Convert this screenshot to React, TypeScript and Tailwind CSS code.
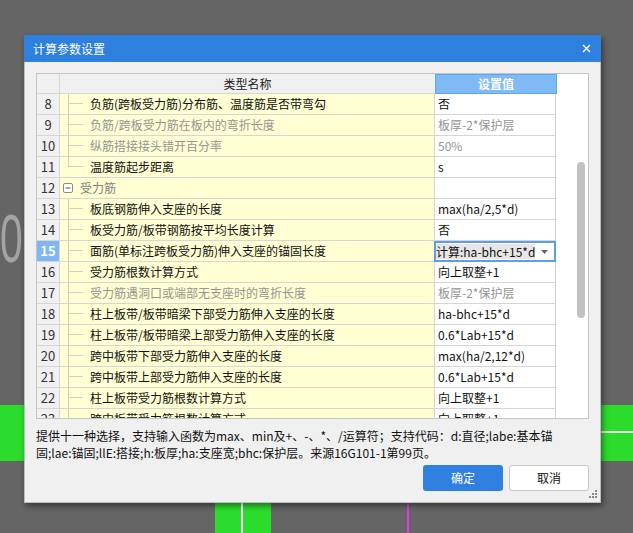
import React from "react";

type Row = {
  n: number;
  name: string;
  value: string;
  gray?: boolean;
  group?: boolean;
  last?: boolean;
  selected?: boolean;
};

const rows: Row[] = [
  { n: 8, name: "负筋(跨板受力筋)分布筋、温度筋是否带弯勾", value: "否" },
  { n: 9, name: "负筋/跨板受力筋在板内的弯折长度", value: "板厚-2*保护层", gray: true },
  { n: 10, name: "纵筋搭接接头错开百分率", value: "50%", gray: true },
  { n: 11, name: "温度筋起步距离", value: "s", last: true },
  { n: 12, name: "受力筋", value: "", group: true },
  { n: 13, name: "板底钢筋伸入支座的长度", value: "max(ha/2,5*d)" },
  { n: 14, name: "板受力筋/板带钢筋按平均长度计算", value: "否" },
  { n: 15, name: "面筋(单标注跨板受力筋)伸入支座的锚固长度", value: "计算:ha-bhc+15*d", selected: true },
  { n: 16, name: "受力筋根数计算方式", value: "向上取整+1" },
  { n: 17, name: "受力筋遇洞口或端部无支座时的弯折长度", value: "板厚-2*保护层", gray: true },
  { n: 18, name: "柱上板带/板带暗梁下部受力筋伸入支座的长度", value: "ha-bhc+15*d" },
  { n: 19, name: "柱上板带/板带暗梁上部受力筋伸入支座的长度", value: "0.6*Lab+15*d" },
  { n: 20, name: "跨中板带下部受力筋伸入支座的长度", value: "max(ha/2,12*d)" },
  { n: 21, name: "跨中板带上部受力筋伸入支座的长度", value: "0.6*Lab+15*d" },
  { n: 22, name: "柱上板带受力筋根数计算方式", value: "向上取整+1" },
  { n: 23, name: "跨中板带受力筋根数计算方式", value: "向上取整+1" },
];

function TreeLine({ last }: { last?: boolean }) {
  return (
    <svg width="30" height="20" className="shrink-0">
      <line x1="8.5" y1="0" x2="8.5" y2={last ? 10 : 20} stroke="#cfcfc4" strokeWidth="1" />
      <line x1="8" y1="9.5" x2="23" y2="9.5" stroke="#cfcfc4" strokeWidth="1" />
    </svg>
  );
}

function MinusBox() {
  return (
    <svg width="20" height="20" className="shrink-0">
      <rect x="3.5" y="5.5" width="9" height="9" rx="1.5" fill="#fff" stroke="#8a8a8a" strokeWidth="1" />
      <line x1="5.5" y1="10" x2="10.5" y2="10" stroke="#555" strokeWidth="1" />
    </svg>
  );
}

function TableRow({ r }: { r: Row }) {
  return (
    <div className="flex h-[21px]">
      <div
        className={
          r.selected
            ? "w-[23px] shrink-0 border-r border-b border-[#d6d6d6] bg-[#7db8f5] text-white font-bold flex items-center justify-center text-[13px]"
            : "w-[23px] shrink-0 border-r border-b border-[#d6d6d6] bg-[#f0f0f0] text-[#333] flex items-center justify-center text-[13px]"
        }
      >
        {r.n}
      </div>
      <div className="w-[375px] shrink-0 border-r border-b border-[#d6d6d6] bg-[#ffffd3] flex items-center overflow-hidden whitespace-nowrap">
        {r.group ? (
          <>
            <MinusBox />
            <span className="text-[#808080]">{r.name}</span>
          </>
        ) : (
          <>
            <TreeLine last={r.last} />
            <span className={r.gray ? "text-[#959595]" : "text-[#111]"}>{r.name}</span>
          </>
        )}
      </div>
      {r.selected ? (
        <div className="w-[122px] -ml-px shrink-0 border-2 border-[#5b9ee9] bg-white flex items-center justify-between whitespace-nowrap overflow-hidden">
          <span className="bg-[#e6e6e6] text-[#111] leading-[15px]">{r.value}</span>
          <svg width="7" height="4" className="mr-[6px] shrink-0">
            <path d="M0 0H7L3.5 4Z" fill="#666" />
          </svg>
        </div>
      ) : (
        <div
          className={
            r.gray
              ? "w-[121px] shrink-0 border-r border-b border-[#d6d6d6] bg-white pl-[3px] flex items-center whitespace-nowrap overflow-hidden text-[#959595]"
              : "w-[121px] shrink-0 border-r border-b border-[#d6d6d6] bg-white pl-[3px] flex items-center whitespace-nowrap overflow-hidden text-[#111]"
          }
        >
          {r.value}
        </div>
      )}
      <div className="flex-1 bg-white" />
    </div>
  );
}

export default function App() {
  return (
    <div className="relative w-[633px] h-[533px] overflow-hidden bg-[#656565] font-['Noto_Sans_CJK_SC',sans-serif]">
      {/* background canvas */}
      <div className="absolute left-0 top-[204px] text-[68px] leading-none text-[#a3a3a3] font-['Liberation_Sans',sans-serif] scale-x-[0.6] origin-left">
        0
      </div>
      <div className="absolute left-0 top-[405px] w-[30px] h-[56px] bg-[#2cdc2c]" />
      <div className="absolute left-[600px] top-[405px] w-[33px] h-[56px] bg-[#2cdc2c]">
        <div className="mt-[26px] h-[2px] bg-[#e8e8e8]" />
      </div>
      <div className="absolute left-[215px] top-[495px] w-[56px] h-[38px] bg-[#2cdc2c] flex">
        <div className="ml-[26px] w-[2px] bg-white" />
      </div>
      <div className="absolute left-[407px] top-[495px] w-[2px] h-[38px] bg-[#e23be2]" />

      {/* dialog */}
      <div className="absolute left-[24px] top-[35px] w-[577px] h-[468px] flex flex-col shadow-[2px_3px_6px_rgba(0,0,0,0.45)]">
        <div className="h-[27px] shrink-0 bg-[#2e80df] flex items-center justify-between pl-[9px] pr-[10px] text-white text-[12px]">
          <span>计算参数设置</span>
          <svg width="9" height="9">
            <path d="M1 1L8 8M8 1L1 8" stroke="white" strokeWidth="1.4" />
          </svg>
        </div>
        <div className="relative flex-1 bg-[#f0f0f0] border-x border-b border-[#b5bfca] pl-[11px] pt-[11px] flex flex-col text-[12px]">
          <div className="relative w-[553px] h-[346px] shrink-0 border border-[#c4c4c4] bg-white overflow-hidden">
            <div className="flex h-[20px]">
              <div className="w-[23px] shrink-0 border-r border-b border-[#d6d6d6] bg-[#f0f0f0]" />
              <div className="w-[375px] shrink-0 border-b border-[#d6d6d6] bg-[#f0f0f0] flex items-center justify-center text-[#222]">
                类型名称
              </div>
              <div className="w-[122px] shrink-0 border border-[#62a5ef] bg-[#80baf6] flex items-center justify-center text-white font-bold">
                设置值
              </div>
              <div className="flex-1 bg-white" />
            </div>
            {rows.map((r) => (
              <TableRow key={r.n} r={r} />
            ))}
            <div className="absolute left-[540px] top-[88px] w-[8px] h-[156px] rounded-full bg-[#c2c2c2]" />
          </div>
          <div className="mt-[8px] leading-[17px] text-[#111] whitespace-nowrap">
            <div>提供十一种选择，支持输入函数为max、min及+、-、*、/运算符；支持代码：d:直径;labe:基本锚</div>
            <div>固;lae:锚固;llE:搭接;h:板厚;ha:支座宽;bhc:保护层。来源16G101-1第99页。</div>
          </div>
          <div className="mt-[4px] flex justify-end gap-[6px] pr-[11px]">
            <button className="w-[80px] h-[26px] rounded-[3px] bg-[#2f80e0] text-white">确定</button>
            <button className="w-[80px] h-[26px] rounded-[3px] bg-white border border-[#c8c8c8] text-[#111]">取消</button>
          </div>
          <svg width="10" height="9" className="absolute right-[2px] bottom-[3px]">
            <rect x="7" y="0" width="2" height="2" fill="#8a8a8a" />
            <rect x="4" y="3" width="2" height="2" fill="#8a8a8a" />
            <rect x="7" y="3" width="2" height="2" fill="#8a8a8a" />
            <rect x="1" y="6" width="2" height="2" fill="#8a8a8a" />
            <rect x="4" y="6" width="2" height="2" fill="#8a8a8a" />
            <rect x="7" y="6" width="2" height="2" fill="#8a8a8a" />
          </svg>
        </div>
      </div>
    </div>
  );
}
